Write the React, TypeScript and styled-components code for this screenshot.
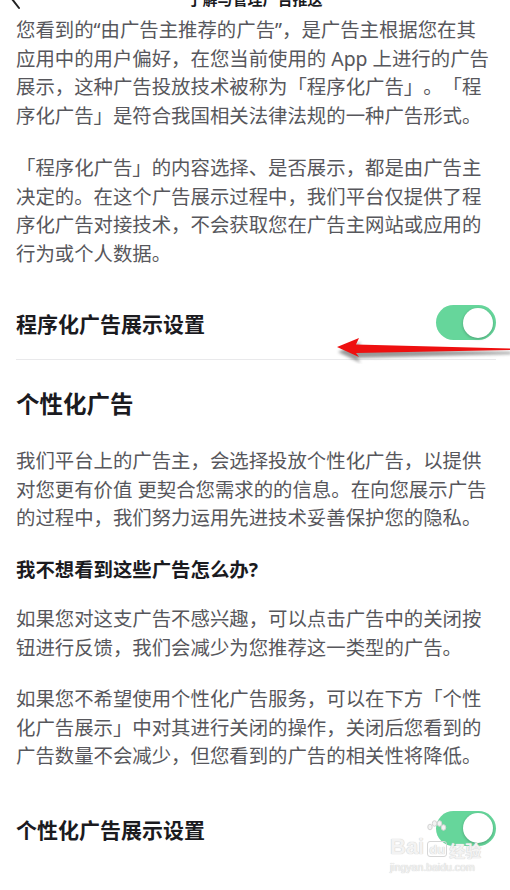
import React from "react";
import styled, { createGlobalStyle } from "styled-components";

const Global = createGlobalStyle`
  html, body { margin: 0; padding: 0; background: #ffffff; }
  body {
    font-family: "Noto Sans", "Noto Sans CJK SC", sans-serif;
    text-spacing-trim: space-all;
  }
`;

const Page = styled.div`
  position: relative;
  width: 510px;
  height: 890px;
  overflow: hidden;
  background: #fff;
  box-sizing: border-box;
  padding: 0 14px 0 16px;
`;

const Header = styled.div`
  position: relative;
  height: 15px;
  margin: 0 -14px 0 -16px;
  overflow: hidden;
  display: flex;
  justify-content: center;
`;

const Title = styled.div`
  margin-top: -9px;
  font-family: "Noto Sans CJK SC", sans-serif;
  font-size: 15px;
  line-height: 15px;
  font-weight: 700;
  color: #1b1b1f;
  white-space: nowrap;
`;

const Back = styled.svg`
  position: absolute;
  left: 8px;
  top: -12px;
`;

const Para = styled.div<{ $mt: number }>`
  margin-top: ${(p) => p.$mt}px;
  font-size: 19.4px;
  line-height: 28.5px;
  color: #57575c;
`;

const Line = styled.div`
  white-space: nowrap;
`;

const SubHead = styled.div<{ $mt: number }>`
  margin-top: ${(p) => p.$mt}px;
  font-size: 19.4px;
  line-height: 28.5px;
  font-weight: 700;
  color: #1b1b1f;
`;

const Heading = styled.div<{ $mt: number }>`
  margin-top: ${(p) => p.$mt}px;
  font-size: 23.5px;
  line-height: 32px;
  font-weight: 700;
  color: #1b1b1f;
`;

const SettingRow = styled.div<{ $mt: number; $divider?: boolean }>`
  margin-top: ${(p) => p.$mt}px;
  display: flex;
  align-items: center;
  justify-content: space-between;
  padding-bottom: ${(p) => (p.$divider ? 19 : 0)}px;
  border-bottom: ${(p) => (p.$divider ? "1px solid #e9e9eb" : "none")};
`;

const SettingLabel = styled.div`
  font-size: 21px;
  line-height: 30px;
  font-weight: 700;
  color: #1b1b1f;
  margin-top: 3px;
`;

const Toggle = styled.div`
  position: relative;
  width: 60px;
  height: 35px;
  border-radius: 18px;
  background: #66d69b;
  flex-shrink: 0;
`;

const Knob = styled.div`
  position: absolute;
  right: 3px;
  top: 2.5px;
  width: 30px;
  height: 30px;
  border-radius: 50%;
  background: #fff;
  box-shadow: 0 1px 3px rgba(0, 0, 0, 0.25);
`;

const Arrow = styled.svg`
  position: absolute;
  left: 330px;
  top: 330px;
`;

const Watermark = styled.div`
  position: absolute;
  left: 390px;
  top: 836px;
  color: #f3f3f3;
  font-family: "Liberation Sans", Arial, sans-serif;
  text-shadow: 0 0 1px #d0d0d0, 0 0 1px #d0d0d0;
  line-height: 1;
`;

const WmTop = styled.div`
  display: flex;
  align-items: flex-end;
  font-size: 22px;
  font-weight: 700;
`;

const WmDuBox = styled.span`
  position: relative;
  display: inline-block;
  margin: 0 2px 0 3px;
`;

const WmDu = styled.span`
  display: inline-block;
  border: 1px solid #d6d6d6;
  border-radius: 3px;
  font-size: 13px;
  padding: 1px 1px 0;
`;

const Paw = styled.svg`
  position: absolute;
  left: -2px;
  top: -16px;
`;

const WmCn = styled.span`
  font-family: "Noto Sans CJK SC", sans-serif;
  font-size: 16px;
`;

const WmUrl = styled.div`
  font-size: 10.5px;
  margin-top: 4px;
`;

const Para1 = [
  "您看到的“由广告主推荐的广告”，是广告主根据您在其",
  "应用中的用户偏好，在您当前使用的 App 上进行的广告",
  "展示，这种广告投放技术被称为「程序化广告」。「程",
  "序化广告」是符合我国相关法律法规的一种广告形式。",
];
const Para2 = [
  "「程序化广告」的内容选择、是否展示，都是由广告主",
  "决定的。在这个广告展示过程中，我们平台仅提供了程",
  "序化广告对接技术，不会获取您在广告主网站或应用的",
  "行为或个人数据。",
];
const Para3 = [
  "我们平台上的广告主，会选择投放个性化广告，以提供",
  "对您更有价值 更契合您需求的的信息。在向您展示广告",
  "的过程中，我们努力运用先进技术妥善保护您的隐私。",
];
const Para4 = [
  "如果您对这支广告不感兴趣，可以点击广告中的关闭按",
  "钮进行反馈，我们会减少为您推荐这一类型的广告。",
];
const Para5 = [
  "如果您不希望使用个性化广告服务，可以在下方「个性",
  "化广告展示」中对其进行关闭的操作，关闭后您看到的",
  "广告数量不会减少，但您看到的广告的相关性将降低。",
];

const Paragraph = ({ lines, mt }: { lines: string[]; mt: number }) => (
  <Para $mt={mt}>
    {lines.map((l, i) => (
      <Line key={i}>{l}</Line>
    ))}
  </Para>
);

const Switch = () => (
  <Toggle>
    <Knob />
  </Toggle>
);

export default function App() {
  return (
    <>
      <Global />
      <Page>
        <Header>
          <Back width="16" height="22" viewBox="0 0 16 22">
            <path d="M11 2 L4 11 L11 20" fill="none" stroke="#222" strokeWidth="2" strokeLinecap="round" strokeLinejoin="round" />
          </Back>
          <Title>了解与管理广告推送</Title>
        </Header>
        <Paragraph lines={Para1} mt={1} />
        <Paragraph lines={Para2} mt={24} />
        <SettingRow $mt={37} $divider>
          <SettingLabel>程序化广告展示设置</SettingLabel>
          <Switch />
        </SettingRow>
        <Heading $mt={28}>个性化广告</Heading>
        <Paragraph lines={Para3} mt={27} />
        <SubHead $mt={23}>我不想看到这些广告怎么办?</SubHead>
        <Paragraph lines={Para4} mt={21} />
        <Paragraph lines={Para5} mt={23} />
        <SettingRow $mt={40}>
          <SettingLabel>个性化广告展示设置</SettingLabel>
          <Switch />
        </SettingRow>
        <Arrow width="180" height="34" viewBox="0 0 180 34">
          <defs>
            <filter id="ash" x="-10%" y="-50%" width="120%" height="200%">
              <feGaussianBlur stdDeviation="1.5" />
            </filter>
          </defs>
          <polygon
            points="7,19 30,9 26,16 180,19 180,21 26,25 30,30"
            fill="#555"
            opacity="0.6"
            filter="url(#ash)"
            transform="translate(1,3)"
          />
          <polygon points="7,17 29,8 26,14.5 180,18.5 180,20 26,23 29,27" fill="#ee1010" />
        </Arrow>
        <Watermark>
          <WmTop>
            Bai
            <WmDuBox>
              <Paw width="22" height="18" viewBox="0 0 22 18">
                <g fill="#f3f3f3" stroke="#d4d4d4" strokeWidth="1">
                  <ellipse cx="5" cy="7" rx="2.2" ry="2.8" />
                  <ellipse cx="9.5" cy="3.5" rx="2.2" ry="2.8" />
                  <ellipse cx="14.5" cy="3.5" rx="2.2" ry="2.8" />
                  <ellipse cx="18.5" cy="7.5" rx="2.2" ry="2.8" />
                </g>
              </Paw>
              <WmDu>du</WmDu>
            </WmDuBox>
            <WmCn>经验</WmCn>
          </WmTop>
          <WmUrl>jingyan.baidu.com</WmUrl>
        </Watermark>
      </Page>
    </>
  );
}
